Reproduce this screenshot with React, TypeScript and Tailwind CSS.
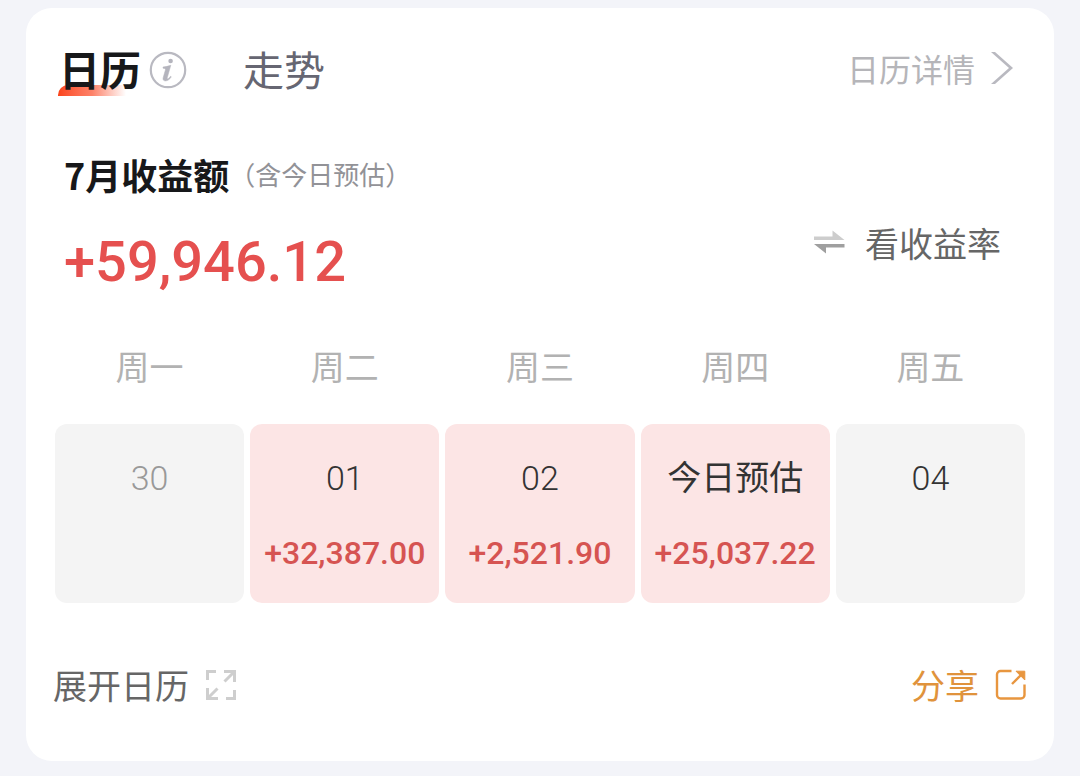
import React from "react";

type Day = { label: string; amount?: string; muted?: boolean };

const weekdays = ["周一", "周二", "周三", "周四", "周五"];

const days: Day[] = [
  { label: "30", muted: true },
  { label: "01", amount: "+32,387.00" },
  { label: "02", amount: "+2,521.90" },
  { label: "今日预估", amount: "+25,037.22" },
  { label: "04" },
];

function InfoIcon() {
  return (
    <svg width="38" height="38" viewBox="0 0 38 38" fill="none" aria-hidden="true">
      <circle cx="19" cy="19" r="17.2" stroke="#b9b9c1" strokeWidth="2.2" />
      <circle cx="21.6" cy="10" r="2.3" fill="#b4b4bd" />
      <path
        d="M14 16c2.600-.2 5-.8 7.800-1.700l-3.500 12.300c-.3 1.100.1 1.500.8 1.100.9-.5 1.700-1.400 2.400-2.400l.8.500c-1.600 2.600-3.500 4.100-5.900 4.100-2 0-2.800-1.300-2.200-3.300l2.100-7.400c.4-1.300 0-1.900-2.300-2z"
        fill="#b4b4bd"
        stroke="#b4b4bd"
        strokeWidth="0.5"
      />
    </svg>
  );
}

function ChevronIcon() {
  return (
    <svg width="24" height="34" viewBox="0 0 24 34" aria-hidden="true">
      <path d="M0 1H4L22 17 4 33H0L18 17z" fill="#b9b9c0" />
    </svg>
  );
}

function SwapIcon() {
  return (
    <svg width="32" height="24" viewBox="0 0 32 24" aria-hidden="true">
      <path d="M1 6.500H19.500V0.500L31.500 10H1z" fill="#cdcdcd" />
      <path d="M31.500 14H1L13 23.500V17.500H31.500z" fill="#9f9f9f" />
    </svg>
  );
}

function ExpandIcon() {
  return (
    <svg width="32" height="32" viewBox="0 0 32 32" fill="none" stroke="#cecece" strokeWidth="3" aria-hidden="true">
      <path d="M2.500 11V2.500H11M19 2.500H29.500V13M29 3 19.500 12.500M29.500 21V29.500H21M2.500 19V29.500H13M3 29 12.500 19.500" />
    </svg>
  );
}

function ShareIcon() {
  return (
    <svg width="32" height="32" viewBox="0 0 32 32" fill="none" stroke="#e8963f" strokeWidth="2.400" aria-hidden="true">
      <path d="M16.500 2H5.500A3.500 3.500 0 0 0 2 5.500V26a3.500 3.500 0 0 0 3.500 3.500H26a3.500 3.500 0 0 0 3.500-3.500V15.500" />
      <path d="M29 3 17 15" />
      <path d="M21 2.200H29.800V11z" fill="#e8963f" strokeWidth="1" />
    </svg>
  );
}

export default function App() {
  return (
    <main className="min-h-screen bg-[#f3f4f9] px-[26px] pt-2 pb-[15px] font-['Noto_Sans_CJK_SC',sans-serif]">
      <section className="rounded-[26px] bg-white px-[23px] pt-[30px] pb-[52px]">
        <header className="flex h-[60px] items-center pr-4 pl-[10px]">
          <div className="flex items-center">
            <button type="button" className="relative isolate text-[41px] leading-[60px] font-bold text-[#17181a]">
              <span className="absolute bottom-0.5 -left-px -z-10 h-[11px] w-[68px] rounded-tl-[10px] bg-linear-to-r from-[#fb4318] via-[#fd8168] to-transparent" />
              日历
            </button>
            <button type="button" aria-label="说明" className="ml-2 pt-1">
              <InfoIcon />
            </button>
          </div>
          <button type="button" className="ml-14 text-[41px] leading-[60px] text-[#666672]">
            走势
          </button>
          <a href="#detail" className="ml-auto flex items-center gap-4 text-[32px] leading-[48px] text-[#b5b5b9]">
            日历详情
            <ChevronIcon />
          </a>
        </header>

        <h2 className="mt-[52px] flex items-center pl-[15px] leading-[48px]">
          <span className="text-[36px] font-bold text-[#17181a]">7月收益额</span>
          <span className="text-[26px] font-normal text-[#929297]">（含今日预估）</span>
        </h2>

        <div className="mt-7 flex items-start justify-between pr-[30px] pl-[15px]">
          <p className="pt-1 font-[Roboto,sans-serif] text-[56px] leading-[64px] font-medium text-[#e5504f]">+59,946.12</p>
          <button type="button" className="flex h-8 items-center gap-5 text-[34px] text-[#666666]">
            <SwapIcon />
            看收益率
          </button>
        </div>

        <table className="mt-10 w-full table-fixed border-separate border-spacing-[6px]">
          <thead>
            <tr>
              {weekdays.map((name) => (
                <th key={name} scope="col" className="p-0 pb-[26px] text-[34px] leading-[52px] font-normal text-[#b2b2b2]">
                  {name}
                </th>
              ))}
            </tr>
          </thead>
          <tbody>
            <tr>
              {days.map((day) => (
                <td
                  key={day.label}
                  className={`h-[179px] rounded-xl p-0 pt-[30px] text-center align-top leading-[48px] ${
                    day.amount ? "bg-[#fce5e5]" : "bg-[#f4f4f4]"
                  }`}
                >
                  <div
                    className={`font-[Roboto,'Noto_Sans_CJK_SC',sans-serif] text-[34px] ${
                      /^\d+$/.test(day.label) ? "font-light" : "font-normal"
                    } ${day.muted ? "text-[#999999]" : "text-[#333333]"}`}
                  >
                    {day.label}
                  </div>
                  {day.amount && (
                    <div className="mt-[27px] font-[Roboto,sans-serif] text-[32px] font-medium text-[#d65452]">
                      {day.amount}
                    </div>
                  )}
                </td>
              ))}
            </tr>
          </tbody>
        </table>

        <footer className="mt-[52px] flex items-center justify-between pr-1 pl-1 text-[34px] leading-[48px]">
          <button type="button" className="flex items-center gap-4 text-[#666666]">
            展开日历
            <ExpandIcon />
          </button>
          <button type="button" className="flex items-center gap-4 text-[#e0933c]">
            分享
            <ShareIcon />
          </button>
        </footer>
      </section>
    </main>
  );
}
